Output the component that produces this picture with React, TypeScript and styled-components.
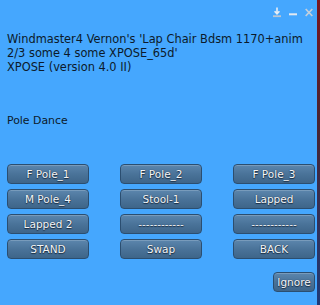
import React from 'react';
import styled, { createGlobalStyle } from "styled-components";

const GlobalStyle = createGlobalStyle`
  html, body {
    margin: 0;
    padding: 0;
    background: #3a1a14;
  }
`

const Screen = styled.div`
  display: flex;
  width: 320px;
  height: 305px;
  overflow: hidden;
`

const Dialog = styled.section`
  width: 317px;
  height: 305px;
  background: #45a7fe;
  display: flex;
  flex-direction: column;
  font-family: "DejaVu Sans", sans-serif;
  color: #0c1a2a;
  box-sizing: border-box;
`

const EdgeStrip = styled.div`
  flex: 1;
  background: linear-gradient(#7a1620 0%, #4a2430 40%, #1f3a78 100%);
`

const TitleBar = styled.div`
  height: 24px;
  display: flex;
  justify-content: flex-end;
  align-items: center;
  gap: 8px;
  padding: 0 4px 0 0;
  box-sizing: border-box;
`

const IconBox = styled.svg`
  width: 8px;
  height: 11px;
  display: block;
`

const Message = styled.div`
  padding: 8px 0 0 7px;
  font-size: 11.4px;
  line-height: 14px;
  height: 90px;
  box-sizing: border-box;
  white-space: nowrap;
`

const Title = styled.div`
  padding-left: 7px;
  font-size: 10.9px;
  line-height: 14px;
  height: 50px;
`

const ButtonGrid = styled.div`
  display: grid;
  grid-template-columns: repeat(3, 82px);
  grid-auto-rows: 20px;
  column-gap: 31px;
  row-gap: 5px;
  padding-left: 7px;
`

const Btn = styled.button<{ $small?: boolean }>`
  box-sizing: border-box;
  width: ${p => (p.$small ? "42px" : "auto")};
  height: 20px;
  padding: 0;
  border: 1px solid #2b4e70;
  border-radius: 4px;
  background: linear-gradient(#5c86ad 0%, #4a7399 50%, #3e6589 100%);
  box-shadow: inset 0 1px 0 rgba(255, 255, 255, 0.18);
  color: #f4f7fa;
  font-family: "DejaVu Sans", sans-serif;
  font-size: 10.5px;
  text-shadow: 0 1px 1px #1a2c40, 0 0 1px #1a2c40;
  cursor: pointer;
`

const Footer = styled.div`
  display: flex;
  justify-content: flex-end;
  padding: 13px 2px 0 0;
`

const buttons = [
  "F Pole_1", "F Pole_2", "F Pole_3",
  "M Pole_4", "Stool-1", "Lapped",
  "Lapped 2", "------------", "------------",
  "STAND", "Swap", "BACK",
];

const App = () => {
  return (
    <Screen>
      <GlobalStyle/>
      <Dialog>
        <TitleBar>
          <IconBox viewBox="0 0 8 11">
            <path d="M4 0.5 V6.5 M1.6 4.2 L4 6.8 L6.4 4.2" stroke="#e8eef5" strokeWidth="1.6" fill="none"/>
            <rect x="0" y="8.3" width="8" height="1.8" fill="#b9c6d4"/>
          </IconBox>
          <IconBox viewBox="0 0 8 11">
            <rect x="0" y="6.3" width="8" height="2" fill="#e2e9f1"/>
          </IconBox>
          <IconBox viewBox="0 0 8 11">
            <path d="M0.7 2 L7.3 9 M7.3 2 L0.7 9" stroke="#c4d0dd" strokeWidth="1.7" fill="none"/>
          </IconBox>
        </TitleBar>
        <Message>
          Windmaster4 Vernon's 'Lap Chair Bdsm 1170+anim<br/>
          2/3 some 4 some XPOSE_65d'<br/>
          XPOSE (version 4.0 II)
        </Message>
        <Title>Pole Dance</Title>
        <ButtonGrid>
          {buttons.map((label, i) => (
            <Btn key={i}>{label}</Btn>
          ))}
        </ButtonGrid>
        <Footer>
          <Btn $small>Ignore</Btn>
        </Footer>
      </Dialog>
      <EdgeStrip/>
    </Screen>
  );
}

export default App;
